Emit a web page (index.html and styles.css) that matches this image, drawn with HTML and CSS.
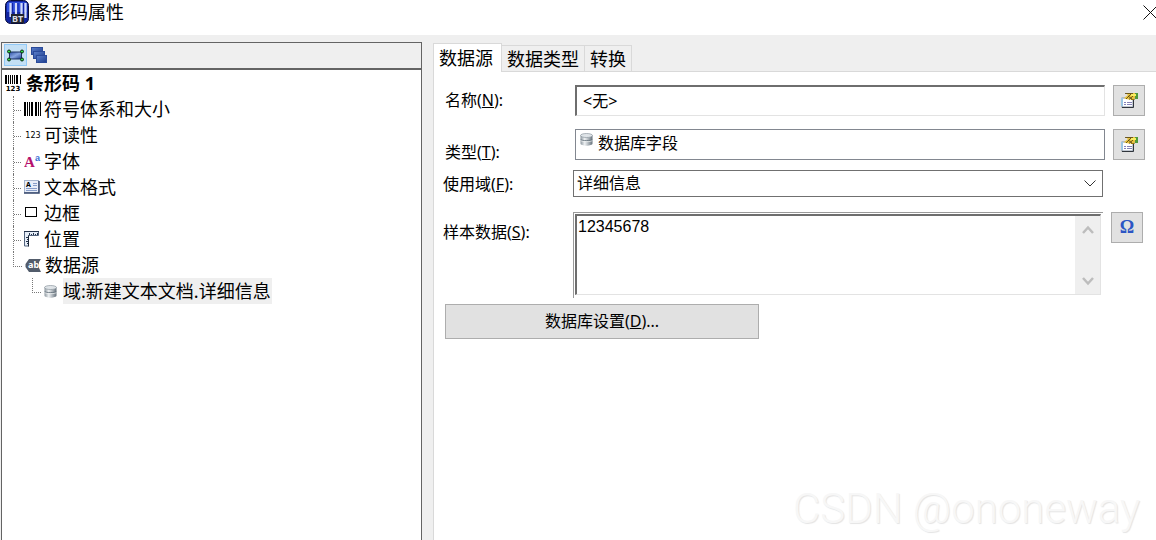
FILE: index.html
```
<!DOCTYPE html>
<html lang="zh-CN">
<head>
    <meta charset="utf-8">
    <title>条形码属性</title>
    <link rel="stylesheet" href="styles.css">
</head>
<body>
    <svg class="defs" width="0" height="0" aria-hidden="true">
        <defs>
            <linearGradient id="steel">
                <stop offset="0" stop-color="#8d979f"/>
                <stop offset="0.35" stop-color="#eef1f3"/>
                <stop offset="1" stop-color="#66727c"/>
            </linearGradient>
            <linearGradient id="blue" x1="0" y1="0" x2="1" y2="1">
                <stop offset="0" stop-color="#2c50a4"/>
                <stop offset="0.5" stop-color="#86a4e0"/>
                <stop offset="1" stop-color="#1c3c8c"/>
            </linearGradient>
            <linearGradient id="navy" x1="0" y1="0" x2="1" y2="1">
                <stop offset="0" stop-color="#5c80cc"/>
                <stop offset="1" stop-color="#1c3c8c"/>
            </linearGradient>
            <symbol id="database" viewBox="0 0 13 13">
                <path d="M0.5 2.5v8c0 1.3 2.6 2.2 6 2.2s6-0.9 6-2.2v-8z" fill="url(#steel)"/>
                <ellipse cx="6.5" cy="2.5" rx="6" ry="2" fill="#dfe4e8" stroke="#8c979f" stroke-width="0.7"/>
                <path d="M0.7 6.500c1 1.500 10.600 1.500 11.600 0" fill="none" stroke="#5b6873" stroke-width="0.8"/>
                <path d="M0.7 7.500c1 1.500 10.600 1.500 11.600 0" fill="none" stroke="#f4f6f7" stroke-width="0.7"/>
            </symbol>
            <symbol id="properties" viewBox="0 0 17 16">
                <rect x="1" y="5" width="11" height="9" fill="#fff" stroke="#8492a4"/>
                <path d="M1 5v8" stroke="#9cc7e4" stroke-width="2"/>
                <path d="M12.500 6v8.500H1" fill="none" stroke="#30353c"/>
                <path d="M3 9.500h2M6 9.500h5M3 11.500h2M6 11.500h5" stroke="#8583b8"/>
                <path d="M4 0h10v5l-3 1.500H8L5 6 3 5l4-3z" fill="#e9c33c"/>
                <path d="M4 0.500h8M7 3l4 3M10 1L5 6M12 3L8 6.500" fill="none" stroke="#4c3c12" stroke-width="0.8"/>
                <path d="M10 6.500h3l2-1.500" fill="none" stroke="#987608"/>
                <rect x="14" y="0" width="3" height="6" fill="#4f9a3c"/>
                <path d="M10 1h5v2h-5z" fill="#f7ee62"/>
            </symbol>
        </defs>
    </svg>

    <header class="titlebar">
        <svg class="logo" width="24" height="24" viewBox="0 0 24 24">
            <rect x="0.500" y="0.500" width="23" height="23" rx="5" fill="#1024a0" stroke="#0a0f3c"/>
            <path d="M2 4q0-2 3-2h14q3 0 3 2v8H2z" fill="#2f50dc"/>
            <path d="M5.500 3v14M11 3v12M16.500 3v12M20.500 3v15" stroke="#d4dcf8" stroke-width="2.200"/>
            <path d="M7.500 3v14M13 3v12M18.500 3v12" stroke="#1426a6" stroke-width="1"/>
            <rect x="6" y="14" width="13" height="9" fill="#20242f"/>
            <text class="logo-text" x="12.500" y="22" text-anchor="middle">BT</text>
        </svg>
        <h1 class="title">条形码属性</h1>
        <button class="close" type="button" aria-label="关闭">
            <svg width="13" height="15" viewBox="0 0 13 15"><path d="M0.500 0.500l14 14M14.500 0.500l-14 14" stroke="#111" fill="none"/></svg>
        </button>
    </header>

    <main class="main">
        <aside class="sidebar">
            <div class="toolbar">
                <button class="tool active" type="button" aria-label="对象">
                    <svg width="17" height="13" viewBox="0 0 17 13">
                        <rect x="2.500" y="3" width="12" height="7" fill="url(#blue)" stroke="#1d3263"/>
                        <g fill="#2fe04a" stroke="#0b2b12">
                            <circle cx="2" cy="2.500" r="1.500"/><circle cx="15" cy="2.500" r="1.500"/>
                            <circle cx="2" cy="10.500" r="1.500"/><circle cx="15" cy="10.500" r="1.500"/>
                        </g>
                    </svg>
                </button>
                <button class="tool" type="button" aria-label="层">
                    <svg width="16" height="16" viewBox="0 0 16 16">
                        <g fill="url(#navy)" stroke="#2a4a9a">
                            <rect x="0.500" y="0.500" width="11" height="7"/>
                            <rect x="2.500" y="4.500" width="11" height="7"/>
                            <rect x="5.500" y="8.500" width="10" height="7"/>
                        </g>
                    </svg>
                </button>
            </div>
            <div class="tree">
                <div class="node root">
                    <svg class="icon" width="17" height="16" viewBox="0 0 17 16">
                        <path d="M1 0v9M12 0v9" stroke="#000" stroke-width="2"/>
                        <path d="M3.500 0v9M5.500 0v9M7.500 0v9M9.500 0v9M15.500 0v9" stroke="#000"/>
                        <text class="digits bold" x="8" y="15.500" text-anchor="middle">123</text>
                    </svg>
                    条形码 1
                </div>
                <ul class="branch">
                    <li class="node">
                        <svg class="icon" width="17" height="14" viewBox="0 0 17 14">
                            <path d="M1 0v14M8 0v14M12 0v14" stroke="#000" stroke-width="2"/>
                            <path d="M3.500 0v14M5.500 0v14M14.500 0v14M16.500 0v14" stroke="#000"/>
                        </svg>
                        符号体系和大小
                    </li>
                    <li class="node">
                        <svg class="icon" width="17" height="14" viewBox="0 0 17 14">
                            <text class="digits" x="9" y="10" text-anchor="middle">123</text>
                        </svg>
                        可读性
                    </li>
                    <li class="node">
                        <svg class="icon" width="17" height="22" viewBox="0 0 17 22">
                            <text class="glyph-a" x="0" y="17">A</text>
                            <text class="glyph-b" x="11" y="11">a</text>
                        </svg>
                        字体
                    </li>
                    <li class="node">
                        <svg class="icon" width="17" height="14" viewBox="0 0 17 14">
                            <rect x="0.500" y="0.500" width="14" height="12" fill="#e9eef8" stroke="#a5b4cc"/>
                            <path d="M15 1v12H0" fill="none" stroke="#34466b" stroke-width="1.500"/>
                            <path d="M9 3.500h4M9 5.500h4M2 8.500h11M2 10.500h11" stroke="#879dc8"/>
                            <text class="glyph-c" x="2" y="7">A</text>
                        </svg>
                        文本格式
                    </li>
                    <li class="node">
                        <svg class="icon" width="17" height="14" viewBox="0 0 17 14">
                            <rect x="1.500" y="1.500" width="11" height="9" fill="#fff" stroke="#000"/>
                        </svg>
                        边框
                    </li>
                    <li class="node">
                        <svg class="icon" width="17" height="16" viewBox="0 0 17 16">
                            <path d="M0.500 0.500h14v4h-10v10.500h-4z" fill="#e6edf7" stroke="#53647e"/>
                            <path d="M0 0.500h15" stroke="#23324a"/>
                            <path d="M4.500 4.500v11" stroke="#1a2638"/>
                            <path d="M5.500 2v2M7.500 3v1M9.500 2v2M11.500 3v1M13.500 2v2M2 6.500h2M3 8.500h1M2 10.500h2M3 12.500h1" stroke="#23324a"/>
                        </svg>
                        位置
                    </li>
                    <li class="node last">
                        <svg class="icon" width="17" height="13" viewBox="0 0 17 13">
                            <path d="M4 0h12l-2 3v6l2 4H4L0.500 8V5z" fill="#525c6b"/>
                            <text class="glyph-abc" x="3" y="9">ab</text>
                            <path d="M16 4q-3 2.500 0 5" fill="none" stroke="#fff"/>
                        </svg>
                        数据源
                    </li>
                </ul>
                <ul class="branch nested">
                    <li class="node last">
                        <svg class="icon" width="13" height="13"><use href="#database"/></svg>
                        <span class="selected">域:新建文本文档.详细信息</span>
                    </li>
                </ul>
            </div>
        </aside>

        <section class="content">
            <nav class="tabs" role="tablist">
                <button class="tab current" type="button" role="tab" aria-selected="true">数据源</button>
                <button class="tab" type="button" role="tab">数据类型</button>
                <button class="tab" type="button" role="tab">转换</button>
            </nav>
            <form class="panel">
                <div class="row name-row">
                    <label class="label" for="name">名称(<u>N</u>):</label>
                    <input class="field name" id="name" type="text" value="&lt;无&gt;">
                    <button class="side-button" type="button" aria-label="名称属性">
                        <svg width="17" height="16"><use href="#properties"/></svg>
                    </button>
                </div>
                <div class="row type-row">
                    <label class="label" for="type">类型(<u>T</u>):</label>
                    <div class="field type">
                        <svg width="13" height="13"><use href="#database"/></svg>
                        <input class="type-input" id="type" type="text" value="数据库字段" readonly>
                    </div>
                    <button class="side-button" type="button" aria-label="类型属性">
                        <svg width="17" height="16"><use href="#properties"/></svg>
                    </button>
                </div>
                <div class="row inset use-row">
                    <label class="label" for="use">使用域(<u>F</u>):</label>
                    <div class="field combo">
                        <select class="select" id="use">
                            <option>详细信息</option>
                        </select>
                        <svg class="arrow" width="12" height="7" viewBox="0 0 12 7"><path d="M0.500 0.500L6 6l5.500-5.500" fill="none" stroke="#333"/></svg>
                    </div>
                </div>
                <div class="row inset sample-row">
                    <label class="label" for="sample">样本数据(<u>S</u>):</label>
                    <div class="frame">
                        <div class="sample">
                            <textarea class="sample-text" id="sample">12345678</textarea>
                            <div class="scroll">
                                <svg width="12" height="10" viewBox="0 0 12 10"><path d="M1 8l5-5.500L11 8" fill="none" stroke="#bdbdbd" stroke-width="2.500"/></svg>
                                <svg width="12" height="10" viewBox="0 0 12 10"><path d="M1 2l5 5.500L11 2" fill="none" stroke="#bdbdbd" stroke-width="2.500"/></svg>
                            </div>
                        </div>
                    </div>
                    <button class="side-button omega" type="button">Ω</button>
                </div>
                <button class="settings" type="button">数据库设置(<u>D</u>)...</button>
            </form>
        </section>
    </main>
    <div class="watermark">CSDN @ononeway</div>
</body>
</html>
```
FILE: styles.css
```
* {
    box-sizing: border-box;
}

body {
    display: flex;
    flex-direction: column;
    height: 100vh;
    margin: 0;
    overflow: hidden;
    background-color: #efefef;
    color: #000;
    font-family: "Noto Sans", "Noto Sans CJK SC", sans-serif;
    font-size: 16px;
}

button, input, select, textarea {
    margin: 0;
    padding: 0;
    border: none;
    border-radius: 0;
    background: none;
    color: inherit;
    font: inherit;
    outline: none;
}

svg {
    display: block;
    flex: none;
}

.defs {
    position: absolute;
}

/* title bar */

.titlebar {
    display: flex;
    align-items: center;
    height: 35px;
    padding: 0 0 11px 5px;
    background-color: #fff;
}

.logo-text {
    fill: #d8dbe4;
    font-size: 9px;
    font-weight: bold;
}

.title {
    flex: 1;
    margin: 0 0 0 5px;
    font-size: 18px;
    font-weight: normal;
    line-height: 24px;
}

.main {
    display: flex;
    flex: 1;
    min-height: 0;
    padding: 7px 0 0 1px;
}

/* left tree */

.sidebar {
    width: 421px;
    border: 1px solid #646464;
    border-bottom: none;
    background-color: #fff;
}

.toolbar {
    display: flex;
    height: 27px;
    padding: 1px 2px;
    border-bottom: 2px solid #646464;
    background-color: #efefef;
}

.tool {
    display: flex;
    align-items: center;
    justify-content: center;
    width: 23px;
    height: 22px;
    border: 1px solid transparent;
}

.tool.active {
    border-color: #91c9f7;
    background-color: #c4e0f5;
}

.tree {
    padding-left: 3px;
    font-size: 18px;
}

.node {
    display: flex;
    align-items: center;
    gap: 3px;
    height: 26px;
    line-height: 26px;
}

.root {
    gap: 4px;
    font-weight: bold;
}

.branch {
    margin: 0;
    padding: 0 0 0 8px;
    list-style: none;
}

.branch .node::before {
    content: "";
    align-self: flex-start;
    width: 7px;
    height: 14px;
    border-bottom: 1px dotted #777;
}

.branch .node {
    border-left: 1px dotted #777;
}

.branch .node.last {
    border-left: none;
}

.branch .node.last::before {
    width: 8px;
    border-left: 1px dotted #777;
}

.nested {
    padding-left: 27px;
}

.selected {
    margin-left: 3px;
    padding-right: 1px;
    background-color: #efefef;
}

.digits {
    font-family: "DejaVu Sans", sans-serif;
    font-size: 8px;
}

.bold {
    font-weight: bold;
    font-size: 7px;
}

.glyph-a {
    fill: #b5126c;
    font-family: "Liberation Serif", serif;
    font-size: 15px;
    font-weight: bold;
}

.glyph-b {
    fill: #3b6fd6;
    font-family: "Liberation Sans", sans-serif;
    font-size: 9px;
    font-weight: bold;
}

.glyph-c {
    font-size: 7px;
    font-weight: bold;
}

.glyph-abc {
    fill: #fff;
    font-size: 9px;
    font-weight: bold;
}

/* right side */

.content {
    display: flex;
    flex: 1;
    flex-direction: column;
    min-width: 0;
    margin-left: 11px;
}

.tabs {
    display: flex;
    align-items: flex-end;
    height: 28px;
    margin-top: 1px;
}

.tab {
    height: 26px;
    padding: 0 5px;
    border: 1px solid #d9d9d9;
    border-width: 1px 1px 0 0;
    font-size: 18px;
    line-height: 26px;
}

.tab.current {
    height: 29px;
    margin-bottom: -1px;
    padding: 0 8px 0 5px;
    border-left-width: 1px;
    background-color: #fff;
    z-index: 1;
}

.panel {
    flex: 1;
    padding-top: 13px;
    border: 1px solid #d9d9d9;
    border-width: 1px 0 0 1px;
    background-color: #fff;
}

.row {
    display: grid;
    grid-template-columns: 122px minmax(0, 1fr) 32px;
    gap: 8px;
    align-items: center;
    padding: 0 11px;
}

.inset {
    padding: 0 13px 0 9px;
}

.name-row .label {
    align-self: start;
    line-height: 30px;
}

.type-row {
    margin-top: 13px;
}

.type-row .label {
    align-self: end;
    line-height: 16px;
}

.use-row {
    margin-top: 10px;
}

.use-row .label {
    line-height: 24px;
}

.sample-row {
    align-items: start;
    margin-top: 15px;
}

.sample-row .label {
    line-height: 40px;
}

.field {
    width: 100%;
    height: 31px;
    background-color: #fff;
}

.name {
    padding: 0 6px 2px;
    border: 1px solid #e3e3e3;
    border-top: 2px solid #6e6e6e;
    border-left: 2px solid #6e6e6e;
}

.type {
    display: flex;
    gap: 5px;
    padding: 3px 4px;
    border: 1px solid #828790;
}

.type-input {
    flex: 1;
    min-width: 0;
    height: 18px;
}

.combo {
    display: flex;
    align-items: center;
    height: 27px;
    padding-right: 6px;
    border: 1px solid #707070;
}

.select {
    flex: 1;
    height: 25px;
    padding: 0 0 1px 3px;
    appearance: none;
}

.frame {
    height: 86px;
    padding: 1px 2px 3px 1px;
    border: 1px solid #9a9a9a;
    border-width: 1px 0 0 1px;
}

.sample {
    display: flex;
    height: 81px;
    border: 1px solid #e3e3e3;
    border-top: 2px solid #6e6e6e;
    border-left: 2px solid #6e6e6e;
}

.sample-text {
    flex: 1;
    padding: 1px;
    resize: none;
    font-family: "Liberation Sans", sans-serif;
    font-size: 16px;
    line-height: 20px;
}

.scroll {
    display: flex;
    flex-direction: column;
    align-items: center;
    justify-content: space-between;
    width: 25px;
    padding: 9px 0 8px;
    background-color: #efefef;
}

.side-button {
    display: flex;
    align-items: center;
    justify-content: center;
    height: 31px;
    border: 1px solid #adadad;
    background-color: #e1e1e1;
}

.omega {
    color: #2b55c4;
    font-family: "Liberation Serif", serif;
    font-size: 18px;
    font-weight: bold;
}

.settings {
    width: 314px;
    height: 35px;
    margin: 6px 0 0 11px;
    padding-bottom: 3px;
    border: 1px solid #adadad;
    background-color: #e1e1e1;
}

.watermark {
    position: absolute;
    right: 16px;
    bottom: 6px;
    color: #f7f7f7;
    font-family: Roboto, sans-serif;
    font-size: 42px;
    font-weight: 300;
    line-height: 50px;
    text-shadow: 1px 1px 1px #e4e4e4;
    pointer-events: none;
}
```
